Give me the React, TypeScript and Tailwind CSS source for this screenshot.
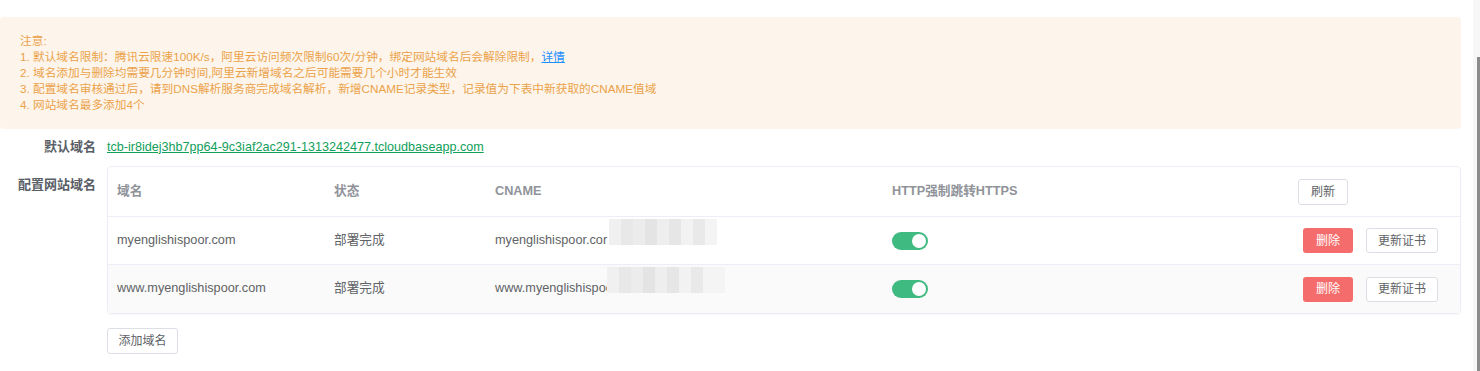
import { memo } from 'react';

interface DomainRow {
  id: string;
  domain: string;
  status: string;
  cname: string;
  https: boolean;
}

const rows: DomainRow[] = [
  { id: '1', domain: 'myenglishispoor.com', status: '部署完成', cname: 'myenglishispoor.cor', https: true },
  { id: '2', domain: 'www.myenglishispoor.com', status: '部署完成', cname: 'www.myenglishispoor.', https: true },
];

const font = { fontFamily: '"Liberation Sans", "Noto Sans CJK SC", sans-serif' };

function Toggle({ on }: { on: boolean }) {
  return (
    <span
      className={`relative inline-block w-[36px] h-[18px] rounded-full ${on ? 'bg-[#3fba80]' : 'bg-[#dcdfe6]'}`}
    >
      <span
        className={`absolute top-[2px] w-[14px] h-[14px] rounded-full bg-white ${on ? 'left-[20px]' : 'left-[2px]'}`}
      />
    </span>
  );
}

// pixelated redaction over the cname values
function Blur({ wide }: { wide?: boolean }) {
  return (
    <span
      className={`absolute top-[-12px] flex h-[26px] pointer-events-none ${wide ? 'left-[122px]' : 'left-[124px]'}`}
    >
      <span className="w-[12px] h-full bg-[#f0f0f0]" />
      <span className="w-[12px] h-full bg-[#e8e8e8]" />
      <span className="w-[12px] h-full bg-[#ececec]" />
      <span className="w-[12px] h-full bg-[#e4e4e4]" />
      <span className="w-[12px] h-full bg-[#eeeeee]" />
      <span className="w-[12px] h-full bg-[#e6e6e7]" />
      <span className="w-[12px] h-full bg-[#f2f2f2]" />
      <span className="w-[12px] h-full bg-[#e9e9e9]" />
      <span className={`${wide ? 'w-[22px]' : 'w-[12px]'} h-full bg-[#f4f4f4]`} />
    </span>
  );
}

function DomainSettings() {
  return (
    <div className="w-[1480px] h-[371px] bg-white flex overflow-hidden" style={font}>
      <div className="flex-1 pt-[17px] pr-[12px]">
        <div className="bg-[#fdf5eb] rounded-[4px] px-5 py-4 text-[11.7px] leading-[16px] text-[#eba24a]">
          <div>注意:</div>
          <div>
            1. 默认域名限制：腾讯云限速100K/s，阿里云访问频次限制60次/分钟，绑定网站域名后会解除限制，
            <a className="text-[#1e90ff] underline cursor-pointer">详情</a>
          </div>
          <div>2. 域名添加与删除均需要几分钟时间,阿里云新增域名之后可能需要几个小时才能生效</div>
          <div>3. 配置域名审核通过后，请到DNS解析服务商完成域名解析，新增CNAME记录类型，记录值为下表中新获取的CNAME值域</div>
          <div>4. 网站域名最多添加4个</div>
        </div>

        <div className="flex items-center mt-[10px] text-[13px] h-[16px]">
          <div className="w-[96px] text-right text-[#5a5e66] font-bold">默认域名</div>
          <a className="ml-[11px] text-[12.6px] text-[#10a05a] underline cursor-pointer">
            tcb-ir8idej3hb7pp64-9c3iaf2ac291-1313242477.tcloudbaseapp.com
          </a>
        </div>

        <div className="flex mt-[11px]">
          <div className="w-[96px] shrink-0 text-right text-[13px] text-[#5a5e66] font-bold pt-[9px]">配置网站域名</div>
          <div className="ml-[11px] flex-1">
            <div className="border border-[#ebeef5] rounded-[4px] shadow-[0_1px_2px_rgba(0,0,0,0.04)] text-[12.7px]">
              <div className="flex items-center h-[50px] border-b border-[#ebeef5] text-[#909399] font-bold">
                <div className="w-[216px] pl-[9px]">域名</div>
                <div className="w-[161px] pl-[10px]">状态</div>
                <div className="w-[397px] pl-[10px]">CNAME</div>
                <div className="w-[406px] pl-[10px]">HTTP强制跳转HTTPS</div>
                <div className="flex-1 pl-[10px]">
                  <button className="w-[50px] h-[26px] border border-[#dcdfe6] rounded-[3px] bg-white text-[12px] text-[#606266] font-normal">
                    刷新
                  </button>
                </div>
              </div>
              {rows.map((row, i) => (
                <div
                  key={row.id}
                  className={`flex items-center h-[48px] text-[#606266] ${i % 2 === 1 ? 'bg-[#fafafa]' : 'bg-white'} ${i < rows.length - 1 ? 'border-b border-[#ebeef5]' : ''}`}
                >
                  <div className="w-[216px] pl-[9px]">{row.domain}</div>
                  <div className="w-[161px] pl-[10px]">{row.status}</div>
                  <div className="w-[397px] pl-[10px] relative">
                    {row.cname}
                    <Blur wide={i === 1} />
                  </div>
                  <div className="w-[406px] pl-[10px] flex items-center">
                    <Toggle on={row.https} />
                  </div>
                  <div className="flex-1 pl-[15px] flex items-center gap-[13px]">
                    <button className="w-[50px] h-[25px] rounded-[3px] bg-[#f56c6c] text-white text-[12px]">删除</button>
                    <button className="w-[72px] h-[25px] border border-[#dcdfe6] rounded-[3px] bg-white text-[12px] text-[#606266]">
                      更新证书
                    </button>
                  </div>
                </div>
              ))}
            </div>
            <button className="mt-[14px] w-[71px] h-[26px] border border-[#dcdfe6] rounded-[3px] bg-white text-[12px] text-[#606266]">
              添加域名
            </button>
          </div>
        </div>
      </div>

      <div className="w-[7px] bg-[#f7f7f7] flex justify-end">
        <div className="w-[3px] mt-[57px] h-[314px] bg-[#8c8c8c]" />
      </div>
    </div>
  );
}

export default memo(DomainSettings);
